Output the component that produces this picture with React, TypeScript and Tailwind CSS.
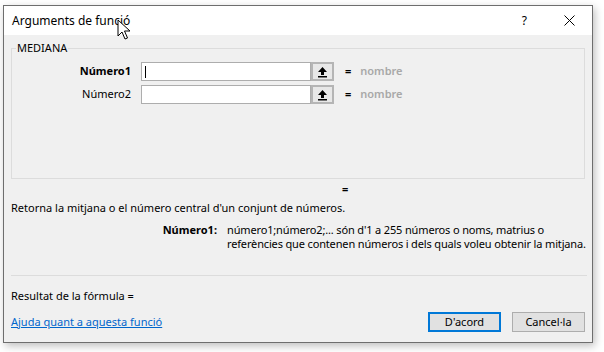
const font = { fontFamily: '"Noto Sans", "Liberation Sans", sans-serif' };

const UpArrow = () => (
  <svg width="11" height="12" viewBox="0 0 11 12">
    <path d="M5.5 1 L10 6 L7 6 L7 9 L4 9 L4 6 L1 6 Z" fill="#000" />
    <rect x="1" y="10" width="9" height="1.5" fill="#000" />
  </svg>
);

const ArgRow = ({ label, bold, caret }: { label: string; bold?: boolean; caret?: boolean }) => (
  <div className="flex items-center h-[19px]">
    <div className={`w-[120px] pr-[1px] text-right text-[11px] text-black ${bold ? "font-bold" : ""}`}>
      {label}
    </div>
    <div className="ml-[9px] flex h-[19px]">
      <div className="w-[170px] h-full bg-white border border-[#adadad] flex items-center pl-[3px]">
        {caret && <div className="w-px h-[12px] bg-black" />}
      </div>
      <div className="w-[23px] h-full bg-[#e8e8e8] border-2 border-[#b5b5b5] flex items-center justify-center">
        <UpArrow />
      </div>
    </div>
    <span className="ml-[11px] text-[11px] font-bold text-black">=</span>
    <span className="ml-[9px] text-[11px] font-semibold text-[#a8a8a8]">nombre</span>
  </div>
);

const Cursor = () => (
  <svg className="absolute left-[117px] top-[19px]" width="14" height="22" viewBox="0 0 14 22">
    <path d="M1 1 L1 17 L5 13 L8 20 L10.5 19 L7.5 12 L13 12 Z" fill="#fff" stroke="#000" strokeWidth="1" />
  </svg>
);

export default function App() {
  return (
    <div className="relative w-[604px] h-[352px] bg-white pt-[5px] pl-[3px]" style={font}>
      <div className="w-[590px] h-[338px] border border-[#6e6e6e] bg-[#f0f0f0] shadow-[2px_3px_8px_rgba(0,0,0,0.25)] flex flex-col">
        {/* title bar */}
        <div className="h-[29px] bg-white flex items-center pl-[8px]">
          <span className="text-[12px] text-black">Arguments de funció</span>
          <span className="ml-auto text-[12px] text-black mr-[37px]">?</span>
          <svg width="11" height="11" viewBox="0 0 11 11" className="mr-[17px]">
            <path d="M0.5 0.5 L10.5 10.5 M10.5 0.5 L0.5 10.5" stroke="#000" strokeWidth="1" />
          </svg>
        </div>

        <div className="px-[7px] pb-[10px] flex flex-col flex-1">
          <fieldset className="mt-[6px] border border-[#dcdcdc] h-[138px] pl-0 pr-0">
            <legend className="ml-[4px] px-[1px] text-[11px] text-black leading-[14px]">MEDIANA</legend>
            <div className="mt-[7px] flex flex-col gap-[4px]">
              <ArgRow label="Número1" bold caret />
              <ArgRow label="Número2" />
            </div>
          </fieldset>

          <div className="mt-[2px] h-[16px] leading-[16px] pl-[331px] text-[11px] font-bold text-black">=</div>
          <div className="mt-[3px] text-[11px] text-black leading-[16px]">
            Retorna la mitjana o el número central d'un conjunt de números.
          </div>

          <div className="mt-[7px] flex text-[11px] leading-[14px] text-black">
            <div className="w-[206px] shrink-0 text-right font-bold">Número1:</div>
            <div className="ml-[10px] whitespace-nowrap tracking-[-0.15px]">
              número1;número2;... són d'1 a 255 números o noms, matrius o
              <br />
              referències que contenen números i dels quals voleu obtenir la mitjana.
            </div>
          </div>

          <div className="mt-[24px] h-px bg-[#dcdcdc] mr-[-2px]" />

          <div className="mt-[12px] text-[11px] text-black leading-[16px]">Resultat de la fórmula =</div>

          <div className="mt-auto flex items-center">
            <a className="text-[11px] text-[#0066cc] underline">Ajuda quant a aquesta funció</a>
            <button className="ml-auto w-[73px] h-[20px] bg-[#e1e1e1] border-2 border-[#0078d7] text-[11px] text-black">
              D'acord
            </button>
            <button className="ml-[11px] w-[73px] h-[20px] bg-[#e1e1e1] border border-[#adadad] text-[11px] text-black">
              Cancel·la
            </button>
          </div>
        </div>
      </div>
      <Cursor />
    </div>
  );
}
